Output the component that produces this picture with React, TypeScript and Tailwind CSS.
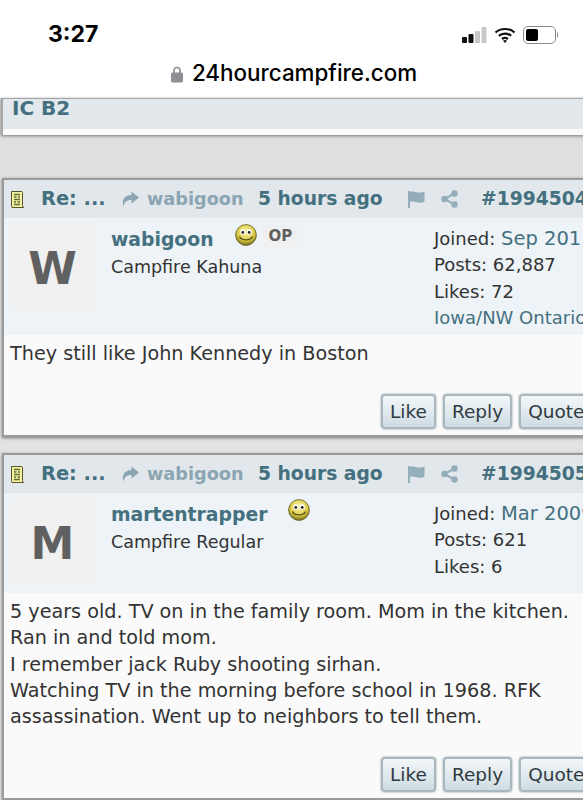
import { ReactNode } from "react";

const font = { fontFamily: '"DejaVu Sans", Verdana, sans-serif' };

function PostIcon() {
  return (
    <svg width="14" height="17" viewBox="0 0 14 17" className="shrink-0">
      <path d="M1.500.5h10.500l.5 1v13l1 2H2l-.5-2z" fill="#f4f0a0" stroke="#55542a" strokeWidth="1" />
      <path d="M4 3.500h6M4 6h2.500M8 6h2M4 8.500h6M4 11h2M7.500 11h2.500M4 13.500h6" stroke="#5f6b3a" strokeWidth="1.300" />
    </svg>
  );
}

function Smiley() {
  return (
    <svg width="22" height="22" viewBox="0 0 22 22" className="shrink-0">
      <defs>
        <radialGradient id="smile" cx="50%" cy="35%" r="65%">
          <stop offset="0%" stopColor="#fbf6b0" />
          <stop offset="65%" stopColor="#dccb45" />
          <stop offset="100%" stopColor="#6f6818" />
        </radialGradient>
      </defs>
      <circle cx="11" cy="11" r="10.400" fill="url(#smile)" stroke="#5f5a20" strokeWidth="0.800" />
      <ellipse cx="7.800" cy="8" rx="2.600" ry="2.700" fill="#fff" />
      <ellipse cx="14.200" cy="8" rx="2.600" ry="2.700" fill="#fff" />
      <circle cx="7.800" cy="8.400" r="1.400" fill="#222" />
      <circle cx="14.200" cy="8.400" r="1.400" fill="#222" />
      <path d="M4.500 12.500c2 4.500 11 4.500 13 0" fill="none" stroke="#57531a" strokeWidth="1.400" />
    </svg>
  );
}

function ReplyArrow() {
  return (
    <svg width="18" height="16" viewBox="0 0 18 16" className="shrink-0">
      <path d="M10.500 0.500 18 6.500l-7.500 6V9C6 9 3.500 10.500 2.500 15.500 0.500 9 3.500 4 10.500 4z" fill="#8ba5b2" />
    </svg>
  );
}

function Flag() {
  return (
    <svg width="18" height="18" viewBox="0 0 18 18" className="shrink-0">
      <path d="M1 1h2v17H1z" fill="#94adba" />
      <path d="M3 2c4-1.500 6 1 10 .5 2 0 3.500-.5 4.500-1v10c-1 .8-2.500 1.300-4.500 1.300-4 0-6-2-10-.8z" fill="#94adba" />
    </svg>
  );
}

function Share() {
  return (
    <svg width="17" height="18" viewBox="0 0 17 18" className="shrink-0">
      <path d="M13.500 3.500 3.500 9l10 5.500" fill="none" stroke="#94adba" strokeWidth="2" />
      <circle cx="13.500" cy="3.500" r="3.200" fill="#94adba" />
      <circle cx="3.500" cy="9" r="3.200" fill="#94adba" />
      <circle cx="13.500" cy="14.500" r="3.200" fill="#94adba" />
    </svg>
  );
}

function Btn({ label }: { label: string }) {
  return (
    <button
      className="h-[35px] shrink-0 rounded-[4px] border-2 border-[#a9b7be] bg-gradient-to-b from-[#f3f7f9] to-[#cfdce3] px-[7px] text-[18.500px] leading-[30px] text-[#2f3a40] shadow-[0_0_2px_#7d8a90]"
      style={font}
    >
      {label}
    </button>
  );
}

interface PostProps {
  number: string;
  initial: string;
  name: string;
  title: string;
  joined: string;
  posts: string;
  likes: string;
  location?: string;
  op?: boolean;
  profileH: string;
  children: ReactNode;
  bodyH: string;
}

function Post(p: PostProps) {
  return (
    <div className="ml-[2px] w-[700px] border-t-[2px] border-b-[2px] border-l-[2px] border-[#9a9a9a] bg-[#fafafa] shadow-[0_1px_3px_#777]">
      {/* header */}
      <div className="flex h-[38px] items-center bg-[#e1e7ea] pl-[6px] font-bold whitespace-nowrap">
        <PostIcon />
        <span className="ml-[17px] w-[80px] text-[19.400px] text-[#44707f]">Re: ...</span>
        <ReplyArrow />
        <span className="ml-[8px] w-[111px] text-[17.700px] text-[#8ba5b2]">wabigoon</span>
        <span className="w-[149px] text-[18.700px] text-[#44707f]">5 hours ago</span>
        <Flag />
        <span className="ml-[16px]">
          <Share />
        </span>
        <span className="ml-[23px] text-[18.700px] text-[#44707f]">{p.number}</span>
      </div>

      {/* profile */}
      <div className={`flex ${p.profileH} bg-[#eef3f7] pt-[5px] pl-[5px]`}>
        <div className="flex h-[87px] w-[87px] shrink-0 items-center justify-center rounded-[4px] bg-[#f0f0f0] pt-[5px] text-[44px] font-bold text-[#606060]">
          {p.initial}
        </div>
        <div className="ml-[15px] w-[323px] shrink-0">
          <div className="flex h-[31px] items-start">
            <span className="pt-[4px] text-[18.800px] leading-[26px] font-bold text-[#44707f]">{p.name}</span>
            <span className="mt-[1px] ml-[21px]">
              <Smiley />
            </span>
            {p.op && (
              <span className="mt-[2px] ml-[6px] rounded-[3px] bg-[#f0f0f0] px-[6px] text-[15px] leading-[23px] font-bold text-[#606060]">
                OP
              </span>
            )}
          </div>
          <div className="text-[17.500px] leading-[26px] text-[#333]">{p.title}</div>
        </div>
        <div className="pt-[3px] text-[18px] leading-[26.300px] whitespace-nowrap text-[#333]">
          <div>
            Joined: <span className="text-[19.500px] text-[#44707f]">{p.joined}</span>
          </div>
          <div>Posts: {p.posts}</div>
          <div>Likes: {p.likes}</div>
          {p.location && <div className="text-[#44707f]">{p.location}</div>}
        </div>
      </div>

      {/* body */}
      <div className={`${p.bodyH} pt-[6px] pl-[6px] text-[19.200px] leading-[26.300px] text-[#333]`}>
        <div className="w-[575px]">{p.children}</div>
      </div>

      {/* buttons */}
      <div className="flex h-[41px] gap-[7px] pl-[377px]">
        <Btn label="Like" />
        <Btn label="Reply" />
        <Btn label="Quote" />
      </div>
    </div>
  );
}

export default function App() {
  return (
    <div
      className="flex h-[800px] w-[583px] flex-col overflow-hidden bg-gradient-to-b from-[#dedede] to-[#e6e6e6]"
      style={font}
    >
      {/* status bar */}
      <div className="flex h-[58px] shrink-0 items-end justify-between bg-white pr-[24px] pb-[10px] pl-[48px]">
        <span className="text-[23px] leading-[28px] font-bold text-black" style={{ fontFamily: "Inter, sans-serif" }}>
          3:27
        </span>
        <div className="mb-[4px] flex items-center gap-[7px]">
          <svg width="25" height="17" viewBox="0 0 25 17">
            <rect x="0" y="10" width="5" height="6" rx="1" fill="#111" />
            <rect x="6.500" y="7" width="5" height="9" rx="1" fill="#111" />
            <rect x="13" y="4" width="5" height="12" rx="1" fill="#c8c8c8" />
            <rect x="19.500" y="0" width="5" height="16" rx="1" fill="#c8c8c8" />
          </svg>
          <svg width="22" height="16" viewBox="0 0 21 16">
            <path d="M1 5.500C6 .8 15 .8 20 5.500M4.300 8.800c3.500-3 9-3 12.400 0M7.500 12c1.800-1.300 4.200-1.300 6 0" fill="none" stroke="#111" strokeWidth="2.200" />
            <path d="M10.500 16l-2-2.300c1.200-.8 2.800-.8 4 0z" fill="#111" />
          </svg>
          <svg width="36" height="18" viewBox="0 0 36 18">
            <rect x="0.500" y="0.500" width="32" height="17" rx="4.500" fill="none" stroke="#8a8a8a" />
            <rect x="3" y="3" width="12" height="12" rx="2" fill="#000" />
            <path d="M34 6c1.500.5 1.500 5.500 0 6z" fill="#8a8a8a" />
          </svg>
        </div>
      </div>

      {/* url bar */}
      <div className="flex h-[40px] shrink-0 items-start justify-center bg-white pt-[1px]">
        <svg width="12" height="17" viewBox="0 0 12 17" className="mt-[7px] mr-[9px] ml-[5px]">
          <path d="M3 7V4.500a3 3 0 0 1 6 0V7" fill="none" stroke="#8e8e93" strokeWidth="1.600" />
          <rect x="0" y="6.500" width="12" height="10" rx="1.500" fill="#8e8e93" />
        </svg>
        <span className="text-[22.400px] leading-[28px] font-medium text-black" style={{ fontFamily: "Inter, sans-serif" }}>
          24hourcampfire.com
        </span>
      </div>

      {/* previous post, scrolled off */}
      <div className="ml-[1px] h-[37px] w-[700px] shrink-0 border-t border-l-[2px] border-[#a5a5a5] bg-[#fafafa] shadow-[0_1px_3px_#777]">
        <div className="h-[30px] bg-[#e2e8eb] pl-[9px] text-[20px] leading-[18px] font-bold text-[#44707f]">IC B2</div>
      </div>

      <div className="h-[43px] shrink-0" />

      <div className="shrink-0">
        <Post
          number="#1994504"
          initial="W"
          name="wabigoon"
          title="Campfire Kahuna"
          op
          joined="Sep 2011"
          posts="62,887"
          likes="72"
          location="Iowa/NW Ontario"
          profileH="h-[117px]"
          bodyH="h-[59px]"
        >
          They still like John Kennedy in Boston
        </Post>
      </div>

      <div className="h-[16px] shrink-0" />

      <div className="shrink-0">
        <Post
          number="#1994505"
          initial="M"
          name="martentrapper"
          title="Campfire Regular"
          joined="Mar 2009"
          posts="621"
          likes="6"
          profileH="h-[100px]"
          bodyH="h-[164px]"
        >
          5 years old. TV on in the family room. Mom in the kitchen.
          <br />
          Ran in and told mom.
          <br />
          I remember jack Ruby shooting sirhan.
          <br />
          Watching TV in the morning before school in 1968. RFK
          <br />
          assassination. Went up to neighbors to tell them.
        </Post>
      </div>
    </div>
  );
}
